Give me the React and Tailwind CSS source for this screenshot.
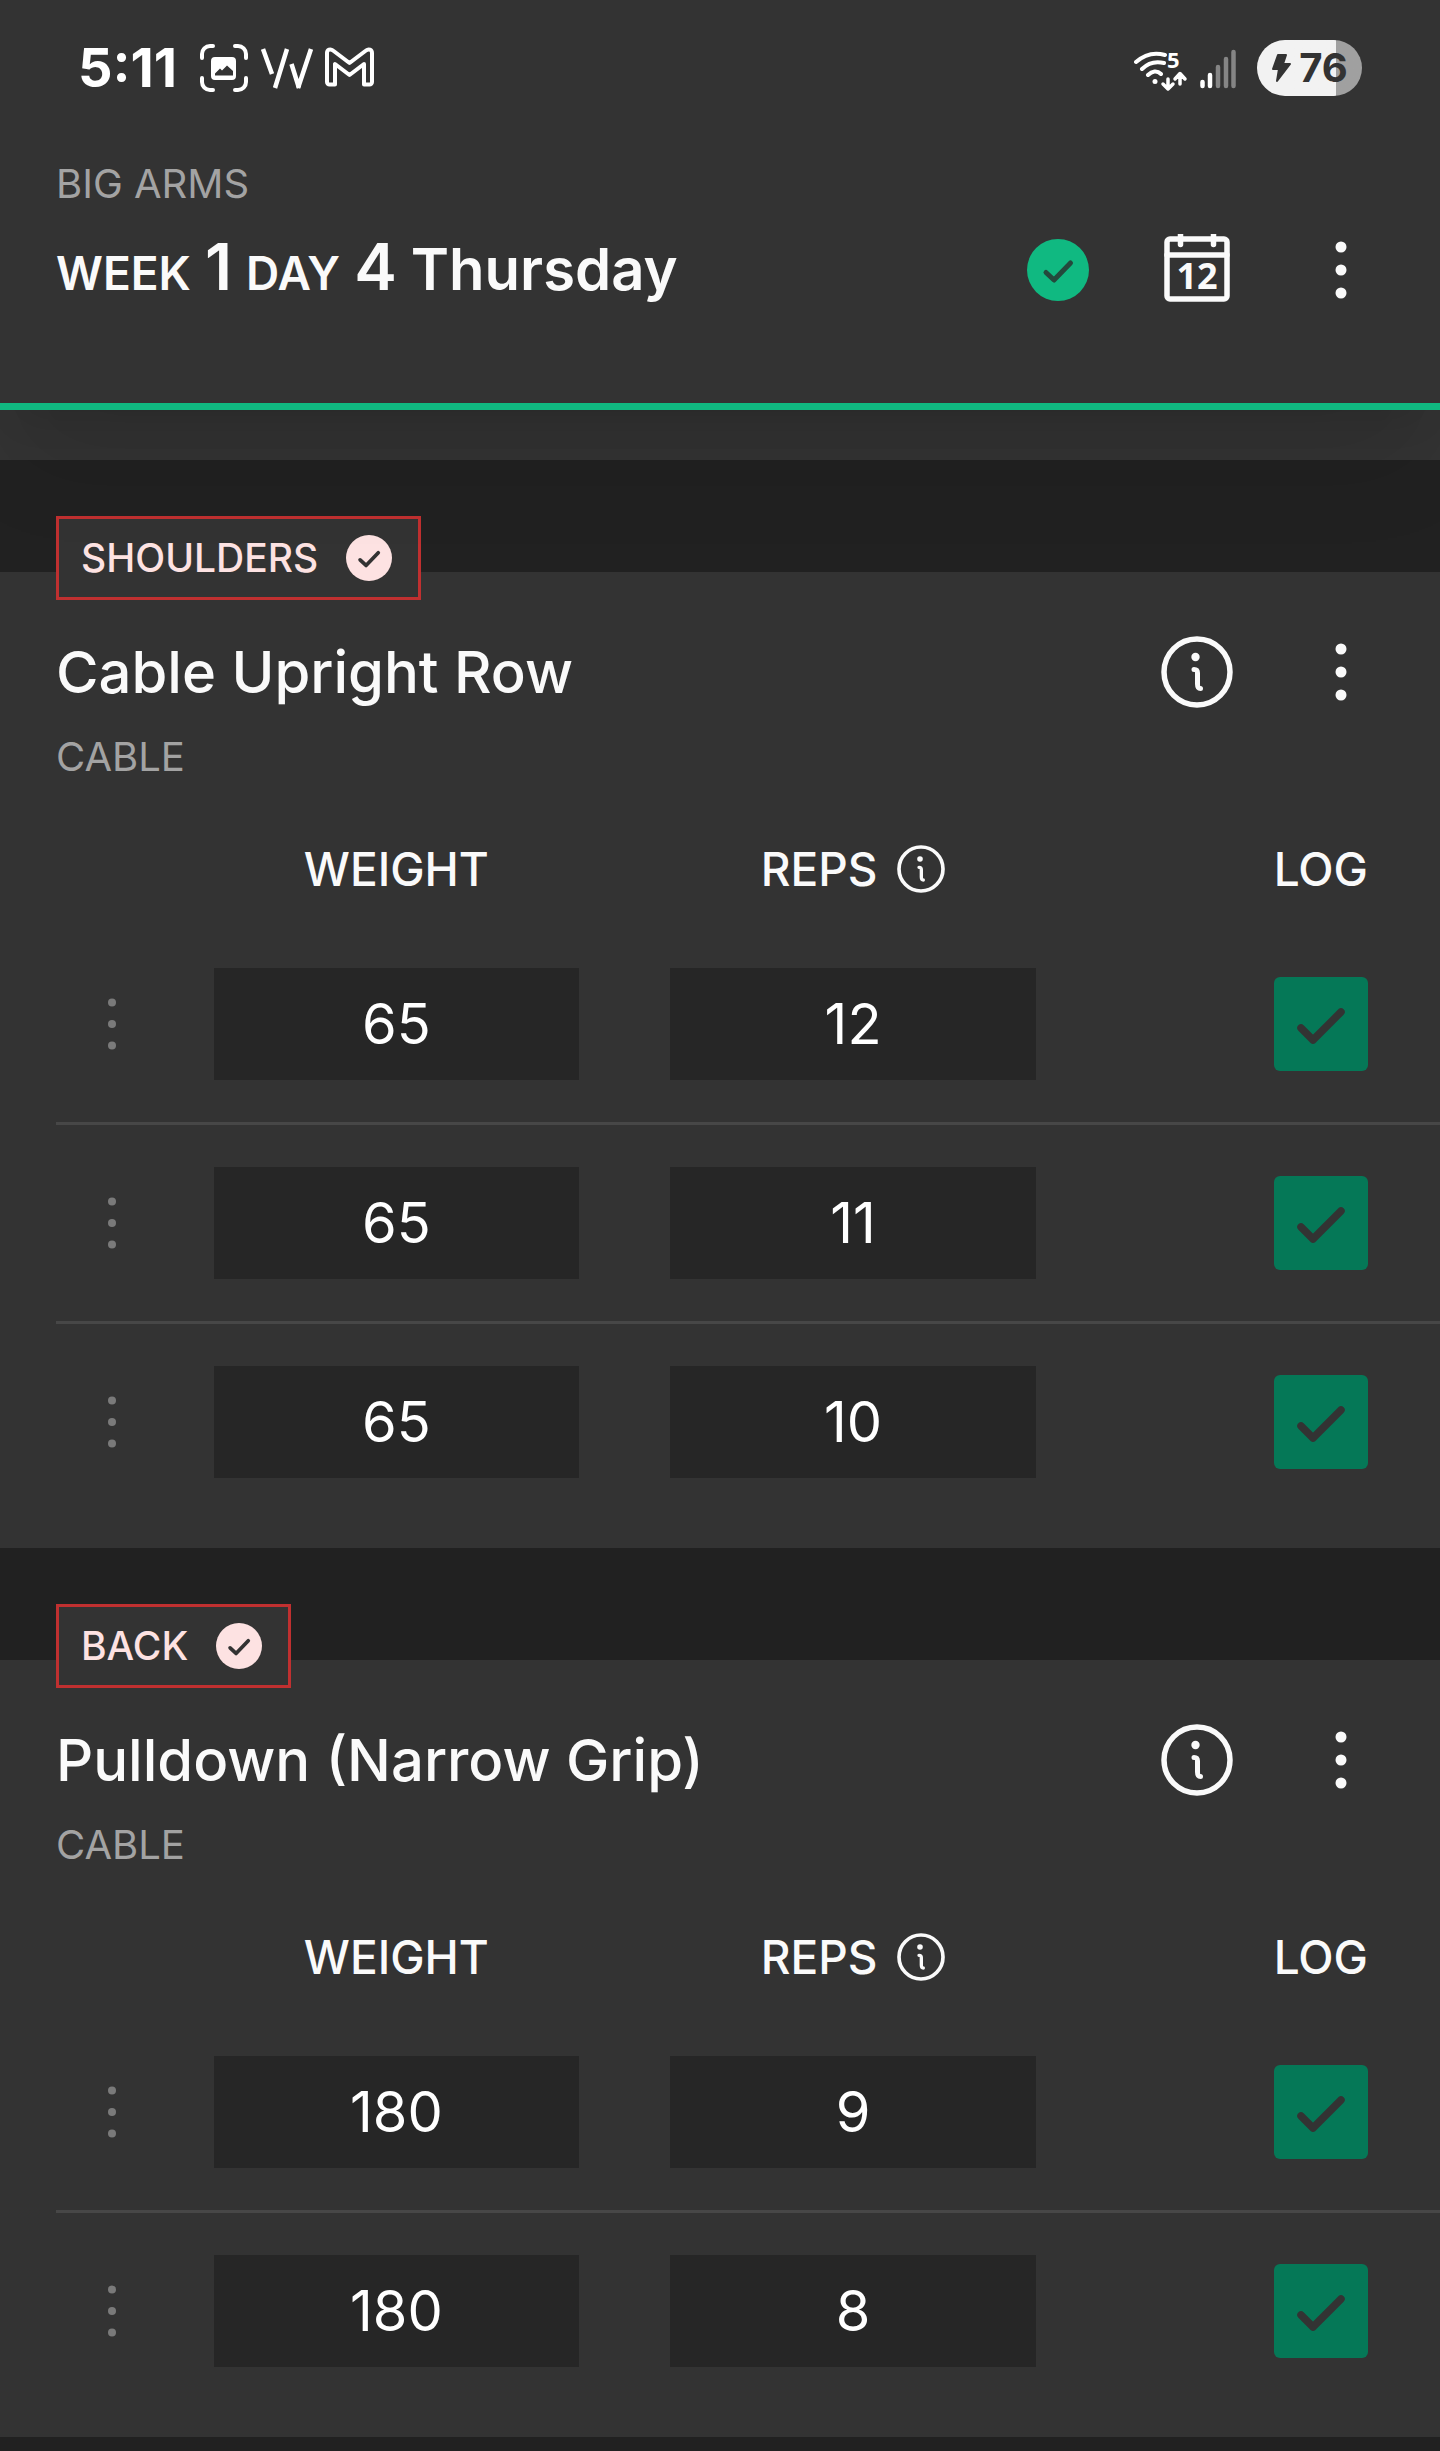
import { memo, useState } from "react";

const exercises = [
  {
    id: "cable-upright-row",
    muscle: "SHOULDERS",
    name: "Cable Upright Row",
    equipment: "CABLE",
    sets: [
      { weight: 65, reps: 12 },
      { weight: 65, reps: 11 },
      { weight: 65, reps: 10 },
    ],
  },
  {
    id: "pulldown-narrow-grip",
    muscle: "BACK",
    name: "Pulldown (Narrow Grip)",
    equipment: "CABLE",
    sets: [
      { weight: 180, reps: 9 },
      { weight: 180, reps: 8 },
    ],
  },
];

// ----------------- Icons -----------------
const CheckCircleIcon = ({ className, checkColor }) => (
  <svg viewBox="0 0 62 62" className={className} aria-hidden="true">
    <circle cx="31" cy="31" r="31" fill="currentColor" />
    <path
      d="M19 33.5l8 7.5 16.5-17"
      fill="none"
      stroke={checkColor}
      strokeWidth="5"
      strokeLinecap="round"
      strokeLinejoin="round"
    />
  </svg>
);

const CalendarIcon = () => (
  <svg viewBox="0 0 72 72" className="size-18" fill="none" aria-hidden="true">
    <g stroke="currentColor" strokeWidth="5.5" strokeLinecap="round">
      <rect x="6" y="5" width="60" height="60" rx="3" />
      <path d="M6 21h60M19.500 0v10.500M52.500 0v10.500" />
    </g>
    <text
      x="36"
      y="55"
      textAnchor="middle"
      fill="currentColor"
      className="font-['Open_Sans',sans-serif] text-[36px] font-bold"
    >
      12
    </text>
  </svg>
);

const DotsIcon = ({ className, r = 5.5, gap = 23 }) => (
  <svg viewBox="0 0 72 72" className={className} fill="currentColor" aria-hidden="true">
    <circle cx="36" cy={36 - gap} r={r} />
    <circle cx="36" cy="36" r={r} />
    <circle cx="36" cy={36 + gap} r={r} />
  </svg>
);

const InfoIcon = ({ className }) => (
  <svg viewBox="0 0 72 72" className={className} fill="none" aria-hidden="true">
    <circle cx="36" cy="36" r="33" stroke="currentColor" strokeWidth="5.5" />
    <circle cx="34.500" cy="21" r="4.200" fill="currentColor" />
    <path
      d="M33 33.500c3 0 3.500 1 3.500 3.500v11c0 3.500 1 4.500 3 4.500"
      stroke="currentColor"
      strokeWidth="5"
      strokeLinecap="round"
    />
  </svg>
);

// ----------------- Status bar -----------------
const StatusBar = () => (
  <div className="flex h-14 items-center justify-between pr-[78px] pl-[78px] text-white">
    <div className="flex items-center">
      <span className="w-[122px] text-[54px] leading-14 font-bold">5:11</span>
      <svg viewBox="0 0 174 48" className="h-12 w-[174px]" fill="none" stroke="currentColor" aria-hidden="true">
        <path
          d="M2 14V10a8 8 0 0 1 8-8h3M35 2h3a8 8 0 0 1 8 8v4M46 34v4a8 8 0 0 1-8 8h-3M13 46h-3a8 8 0 0 1-8-8v-4"
          strokeWidth="4"
          strokeLinecap="round"
        />
        <path
          d="M15 13h17a4 4 0 0 1 4 4v15a4 4 0 0 1-4 4H15a4 4 0 0 1-4-4V17a4 4 0 0 1 4-4zM15 31.500h18v-4.500l-6-5.500-5 5-2-2-5 5z"
          fill="currentColor"
          fillRule="evenodd"
          stroke="none"
        />
        <path d="M63 5l9 25M87 5L75 44M91.500 20l7.500 24M111 5L98 44" strokeWidth="4.500" />
        <path
          d="M135 40.500h-5.500a2.500 2.500 0 0 1-2.500-2.500V9c0-3.500 3.500-4.500 6-2.500l16.500 12.500 16.500-12.500c2.500-2 6-1 6 2.500v29a2.500 2.500 0 0 1-2.500 2.500H164V20l-14.500 11L135 20z"
          strokeWidth="4"
          strokeLinejoin="round"
        />
      </svg>
    </div>
    <div className="flex items-center">
      <svg viewBox="0 0 104 48" className="mr-[19px] h-12 w-[104px]" fill="none" stroke="currentColor" aria-hidden="true">
        <g strokeWidth="4" strokeLinecap="round">
          <path d="M2 18c9-8 19-10 29-7M8 25c6-6 14-8 22-6M14 31c4-4 9-5 13-1" />
          <path d="M34 35v10M29 40l5 5 5-5M46 40V30M41 35l5-5.500 5 5.500" strokeWidth="3.500" strokeLinejoin="round" />
        </g>
        <circle cx="21" cy="37.500" r="2.500" fill="currentColor" stroke="none" />
        <text
          x="33"
          y="24"
          fill="currentColor"
          stroke="none"
          className="font-['Open_Sans',sans-serif] text-[22px] font-bold"
        >
          5
        </text>
        <g strokeWidth="4.500" strokeLinecap="round">
          <path d="M68.500 38v4M76 31v11" />
          <path d="M84 23v19M92 15v27M99.500 8v34" className="text-[#858585]" stroke="currentColor" />
        </g>
      </svg>
      <span className="flex h-14 w-[105px] items-center justify-center gap-2 rounded-full bg-linear-to-r from-[#f2f2f2] from-75% to-[#a0a0a0] to-75% text-[#333333]">
        <svg viewBox="0 0 20 30" className="h-[30px] w-5" fill="currentColor" aria-hidden="true">
          <path
            d="M7 2h8l-3 9h7L6 28l2-12H2z"
            stroke="currentColor"
            strokeWidth="2"
            strokeLinejoin="round"
          />
        </svg>
        <span className="text-[40px] leading-14 font-bold">76</span>
      </span>
    </div>
  </div>
);

// ----------------- Workout header -----------------
const WorkoutHeader = () => (
  <header className="relative z-10 bg-[#333333] pt-10 shadow-[0_70px_88px_-18px_rgb(0_0_0/0.1),0_28px_35px_-21px_rgb(0_0_0/0.1)]">
    <StatusBar />
    <div className="mt-16 pr-[63px] pb-[93px] pl-14">
      <p className="text-[40px] leading-12 text-[#a3a3a3]">BIG ARMS</p>
      <div className="mt-[22px] flex h-20 items-center justify-between">
        <h1 className="flex items-baseline gap-[14px] text-[58px] leading-20 font-semibold">
          <span className="text-[46px]">WEEK</span>
          <span className="text-[64px]">1</span>
          <span className="text-[46px]">DAY</span>
          <span className="text-[64px]">4</span>
          <span>Thursday</span>
        </h1>
        <div className="flex items-center gap-18">
          <CheckCircleIcon className="size-[62px] text-[#10b981]" checkColor="#24493c" />
          <button type="button" aria-label="Open calendar">
            <CalendarIcon />
          </button>
          <button type="button" aria-label="Workout options">
            <DotsIcon className="size-18" />
          </button>
        </div>
      </div>
    </div>
    <div className="h-[7px] bg-[#10b981]" />
  </header>
);

// ----------------- Set row -----------------
const SetRow = memo(({ set, index, exerciseId }) => {
  const [weight, setWeight] = useState(set.weight);
  const [reps, setReps] = useState(set.reps);
  const [logged, setLogged] = useState(true);

  const inputClass =
    "mx-auto block h-28 w-4/5 bg-[#262626] text-center text-[56px] text-white outline-none";

  return (
    <tr className="[&>td]:border-b-3 [&>td]:border-[#474747] [&>td]:py-[42px] last:[&>td]:border-b-0">
      <td>
        <button type="button" aria-label={`Set ${index + 1} options`} className="mx-auto block text-[#7a7a7a]">
          <DotsIcon className="size-18" r={4} gap={21.5} />
        </button>
      </td>
      <td>
        <input
          id={`${exerciseId}-weight-${index}`}
          aria-label={`Set ${index + 1} weight`}
          inputMode="numeric"
          value={weight}
          onChange={(e) => setWeight(e.target.value)}
          className={inputClass}
        />
      </td>
      <td>
        <input
          id={`${exerciseId}-reps-${index}`}
          aria-label={`Set ${index + 1} reps`}
          inputMode="numeric"
          value={reps}
          onChange={(e) => setReps(e.target.value)}
          className={inputClass}
        />
      </td>
      <td className="pr-18">
        <label className="relative ml-auto block size-[94px]">
          <input
            type="checkbox"
            aria-label={`Log set ${index + 1}`}
            checked={logged}
            onChange={(e) => setLogged(e.target.checked)}
            className="block size-full appearance-none rounded-md bg-[#262626] checked:bg-[#057857]"
          />
          {logged && (
            <svg
              viewBox="0 0 94 94"
              className="pointer-events-none absolute inset-0 size-full"
              fill="none"
              aria-hidden="true"
            >
              <path
                d="M27 51l12 12 28-28"
                stroke="#333333"
                strokeWidth="7.500"
                strokeLinecap="round"
                strokeLinejoin="round"
              />
            </svg>
          )}
        </label>
      </td>
    </tr>
  );
});

// ----------------- Exercise card -----------------
const ExerciseCard = ({ exercise }) => (
  <section>
    <div className="h-28 bg-[#212121]" />
    <div className="pb-7 pl-14">
      <div className="relative -mt-14 flex h-[84px] w-fit items-center gap-7 border-3 border-[#c03030] bg-[#333333] pr-[26px] pl-[22px] text-[#fde2e2]">
        <span className="text-[39px] leading-12 font-medium">{exercise.muscle}</span>
        <CheckCircleIcon className="size-[46px]" checkColor="#333333" />
      </div>

      <div className="mt-9 flex h-18 items-center justify-between pr-[63px]">
        <h2 className="text-[58px] leading-18 font-medium">{exercise.name}</h2>
        <div className="flex items-center gap-18">
          <button type="button" aria-label={`About ${exercise.name}`}>
            <InfoIcon className="size-18" />
          </button>
          <button type="button" aria-label={`${exercise.name} options`}>
            <DotsIcon className="size-18" />
          </button>
        </div>
      </div>
      <p className="mt-[25px] text-[40px] leading-12 text-[#a3a3a3]">{exercise.equipment}</p>

      <table className="w-full table-fixed border-separate border-spacing-0">
        <thead>
          <tr className="text-[46px] leading-12 [&>th]:pt-16 [&>th]:pb-[33px] [&>th]:font-medium">
            <th className="w-28" aria-label="Set options" />
            <th className="w-[33%]">WEIGHT</th>
            <th className="w-[33%]">
              <span className="flex items-center justify-center gap-5">
                REPS
                <button type="button" aria-label="About reps">
                  <InfoIcon className="size-12" />
                </button>
              </span>
            </th>
            <th className="pr-18 text-right">LOG</th>
          </tr>
        </thead>
        <tbody>
          {exercise.sets.map((set, index) => (
            <SetRow key={index} set={set} index={index} exerciseId={exercise.id} />
          ))}
        </tbody>
      </table>
    </div>
  </section>
);

export default function App() {
  return (
    <div className="bg-[#333333] font-[Inter,sans-serif] text-[#fafafa]">
      <WorkoutHeader />
      <main className="pt-[50px]">
        {exercises.map((exercise) => (
          <ExerciseCard key={exercise.id} exercise={exercise} />
        ))}
        <div className="h-[14px] bg-[#212121]" />
      </main>
    </div>
  );
}
